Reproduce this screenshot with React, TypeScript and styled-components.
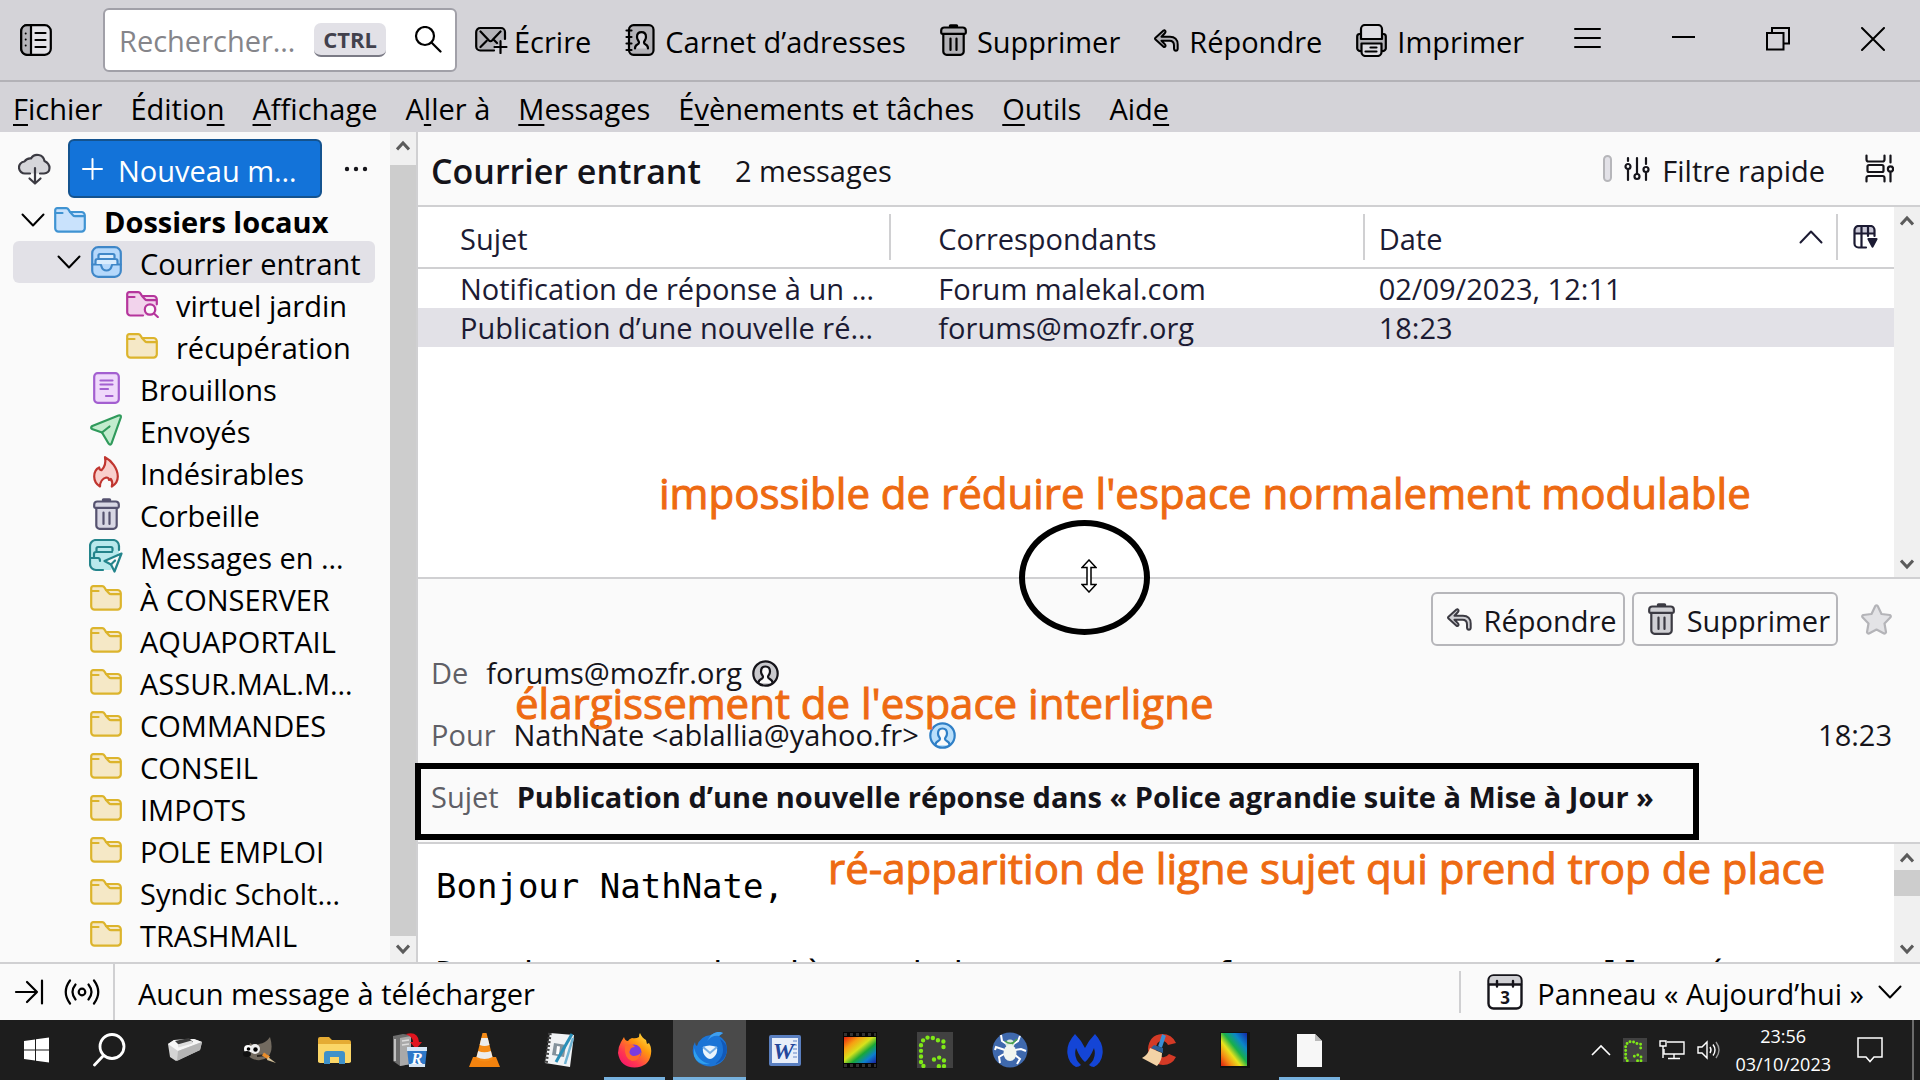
import React from "react";
import styled, { createGlobalStyle, css } from "styled-components";

const Global = createGlobalStyle`
  *, *::before, *::after { box-sizing: border-box; }
  html, body { margin: 0; height: 100%; }
  body {
    font-family: "Open Sans", "Noto Sans", sans-serif;
    font-size: 29px;
    line-height: 38px;
    color: #000;
    background: #fafafa;
    overflow: hidden;
  }
  button, input { font: inherit; color: inherit; margin: 0; }
  button { border: 0; background: none; padding: 0; cursor: default; }
  a { color: inherit; text-decoration: none; }
  svg { display: block; flex: none; }
`;

/* ---------- shared ---------- */

const ink = "#15141a";
const line = "#d0d0d2";

const Window = styled.div`
  display: flex;
  flex-direction: column;
  height: 100vh;
  min-height: 900px;
`;

const Label = styled.span`
  padding-top: 4px;
  white-space: nowrap;
`;

/* ---------- top toolbar ---------- */

const Toolbar = styled.header`
  display: flex;
  align-items: center;
  height: 82px;
  padding: 0 20px;
  background: #d4d3d8;
  border-bottom: 2px solid #b3b2b7;
`;

const SearchBox = styled.label`
  display: flex;
  align-items: center;
  width: 354px;
  height: 64px;
  margin: 0 18px 0 51px;
  padding: 0 13px 0 14px;
  background: #fff;
  border: 2px solid #a1a0a8;
  border-radius: 6px;
`;

const SearchInput = styled.input`
  flex: 1;
  min-width: 0;
  padding: 2px 0 0;
  border: 0;
  outline: 0;
  background: none;
  &::placeholder { color: #85858a; opacity: 1; }
`;

const Key = styled.kbd`
  margin-right: 28px;
  padding: 0 9px;
  border-radius: 7px;
  border-bottom: 2px solid #7a7a85;
  background: #e2e1e7;
  color: #42414d;
  font: 700 22px/32px "Open Sans", "Noto Sans", sans-serif;
`;

const Tools = styled.nav`
  display: flex;
  gap: 34px;
`;

const ToolButton = styled.button<{ $gap?: number }>`
  display: flex;
  align-items: center;
  gap: ${(p) => p.$gap ?? 10}px;
`;

const WindowControls = styled.div`
  display: flex;
  align-items: center;
  gap: 71px;
  margin-left: auto;
  padding-right: 15px;
`;

/* ---------- menu bar ---------- */

const MenuBar = styled.nav`
  display: flex;
  gap: 28px;
  height: 50px;
  padding: 8px 13px 0;
  background: #d4d3d8;
  u {
    text-decoration-thickness: 2px;
    text-underline-offset: 4px;
    text-decoration-skip-ink: none;
  }
`;

/* ---------- main split ---------- */

const Main = styled.main`
  display: flex;
  flex: 1;
  min-height: 0;
`;

const FolderPane = styled.aside`
  display: flex;
  flex: none;
  width: 418px;
  border-right: 2px solid ${line};
`;

const FolderColumn = styled.div`
  flex: 1;
  min-width: 0;
  padding: 7px 13px 0;
`;

const FolderHeader = styled.div`
  display: flex;
  align-items: center;
  padding: 0 8px 1px 5px;
`;

const NewMessage = styled.button`
  display: flex;
  align-items: center;
  gap: 15px;
  width: 254px;
  height: 59px;
  margin: 0 22px 0 17px;
  padding-left: 12px;
  border: 2px solid #14538f;
  border-radius: 6px;
  background: #1373d9;
  color: #fff;
`;

const Tree = styled.ul`
  list-style: none;
  margin: 0;
  padding: 0;
`;

const TreeRow = styled.li<{ $level: number; $selected?: boolean; $bold?: boolean }>`
  display: flex;
  align-items: center;
  height: 42px;
  margin-right: 2px;
  padding-left: ${(p) => 8 + p.$level * 36}px;
  border-radius: 6px;
  ${(p) => p.$selected && css`background: #e2e1e7;`}
  ${(p) => p.$bold && css`font-weight: 700;`}
`;

const Twisty = styled.button`
  width: 26px;
  margin-right: 6px;
`;

const FolderIcon = styled.span`
  display: flex;
  justify-content: center;
  width: 34px;
  margin-right: 17px;
`;

/* ---------- scrollbar ---------- */

const Bar = styled.div`
  display: flex;
  flex-direction: column;
  flex: none;
  width: 26px;
  background: #f0f0f0;
`;

const BarButton = styled.button`
  display: flex;
  align-items: center;
  justify-content: center;
  flex: none;
  height: 26px;
`;

const BarTrack = styled.div<{ $top: number }>`
  display: flex;
  flex: 1;
  padding-top: ${(p) => p.$top}px;
`;

const Thumb = styled.div<{ $size: string }>`
  width: 100%;
  height: ${(p) => p.$size};
  background: #cdcdcd;
`;

function Scrollbar({ size, top = 0 }: { size?: string; top?: number }) {
  return (
    <Bar>
      <BarButton aria-label="Défiler vers le haut">
        <svg width="14" height="11" viewBox="0 0 14 11" fill="none" stroke="#5b5b5b" strokeWidth="3"><path d="M1 9.5 7 3l6 6.5" /></svg>
      </BarButton>
      <BarTrack $top={top}>{size && <Thumb $size={size} />}</BarTrack>
      <BarButton aria-label="Défiler vers le bas">
        <svg width="14" height="11" viewBox="0 0 14 11" fill="none" stroke="#5b5b5b" strokeWidth="3"><path d="M1 1.5 7 8l6-6.5" /></svg>
      </BarButton>
    </Bar>
  );
}

/* ---------- message list ---------- */

const MailPane = styled.section`
  position: relative;
  display: flex;
  flex: 1;
  flex-direction: column;
  min-width: 0;
`;

const ListHeader = styled.div`
  display: flex;
  align-items: center;
  height: 75px;
  padding: 0 26px 0 13px;
  color: ${ink};
  border-bottom: 2px solid ${line};
`;

const Title = styled.h1`
  margin: 0 34px 0 0;
  padding-top: 4px;
  font-size: 34px;
  font-weight: 600;
`;

const FilterButton = styled.button`
  display: flex;
  align-items: center;
  gap: 12px;
  margin: 0 40px 0 auto;
`;

const Pill = styled.span`
  width: 9px;
  height: 27px;
  border: 2px solid #b6b6ba;
  border-radius: 5px;
  background: #e2e1e7;
`;

const ListArea = styled.div`
  display: flex;
  flex: none;
  height: 372px;
  background: #fff;
  border-bottom: 2px solid ${line};
`;

const ListBody = styled.div`
  flex: 1;
  min-width: 0;
`;

const Table = styled.table`
  width: 100%;
  table-layout: fixed;
  border-spacing: 0;
  color: #1c1b33;
  th, td { padding: 0; text-align: left; font-weight: 400; }
  th { height: 62px; border-bottom: 2px solid ${line}; }
`;

const PickerCol = styled.col`
  width: 56px;
`;

const HeadCell = styled.div<{ $indent: number; $last?: boolean }>`
  display: flex;
  align-items: center;
  justify-content: space-between;
  height: 46px;
  padding: 0 13px 0 ${(p) => p.$indent}px;
  border-right: ${(p) => (p.$last ? 0 : 2)}px solid ${line};
`;

const Row = styled.tr<{ $selected?: boolean }>`
  height: 39px;
  background: ${(p) => (p.$selected ? "#e2e1e7" : "transparent")};
`;

const Cell = styled.div<{ $indent: number }>`
  height: 39px;
  padding: 1px 0 0 ${(p) => p.$indent}px;
  white-space: nowrap;
`;

/* ---------- message view ---------- */

const MessageHead = styled.div`
  display: flex;
  flex: none;
  flex-direction: column;
  gap: 18px;
  padding: 13px 28px 24px 13px;
  color: ${ink};
  border-bottom: 2px solid ${line};
`;

const Actions = styled.div`
  display: flex;
  align-items: center;
  justify-content: flex-end;
  gap: 7px;
  margin-bottom: -14px;
`;

const ActionButton = styled.button`
  display: flex;
  align-items: center;
  gap: 12px;
  height: 54px;
  padding: 0 6px 0 14px;
  border: 2px solid #b6b6ba;
  border-radius: 6px;
`;

const StarButton = styled.button`
  margin-left: 16px;
`;

const Field = styled.div`
  display: flex;
  align-items: center;
  height: 44px;
  padding-top: 2px;
  svg { margin-left: 10px; }
`;

const FieldName = styled.span`
  margin-right: 18px;
  color: #5f5f66;
`;

const Subject = styled.strong`
  font-weight: 700;
`;

const Time = styled.time`
  margin-left: auto;
`;

const BodyArea = styled.div`
  display: flex;
  flex: 1;
  min-height: 0;
  background: #fff;
`;

const BodyText = styled.pre`
  flex: 1;
  min-width: 0;
  margin: 0;
  padding: 20px 0 0 18px;
  overflow: hidden;
  font: 34px/44px "DejaVu Sans Mono", monospace;
`;

/* ---------- annotations drawn over the mail pane ---------- */

const Note = styled.p<{ $x: number; $y: number }>`
  position: absolute;
  left: ${(p) => p.$x}px;
  top: ${(p) => p.$y}px;
  margin: 0;
  font: 500 42px/50px "Open Sans", "Noto Sans", sans-serif;
  color: #ee6a12;
  -webkit-text-stroke: 1px #ee6a12;
  white-space: nowrap;
`;

const Ring = styled.div`
  position: absolute;
  left: 601px;
  top: 388px;
  display: flex;
  align-items: center;
  justify-content: center;
  width: 131px;
  height: 115px;
  padding: 0 0 4px 8px;
  border: 6px solid #000;
  border-radius: 50%;
`;

const Frame = styled.div`
  position: absolute;
  left: -3px;
  top: 631px;
  width: 1284px;
  height: 77px;
  border: 6px solid #000;
`;

/* ---------- status bar ---------- */

const StatusBar = styled.footer`
  display: flex;
  align-items: center;
  flex: none;
  height: 58px;
  padding: 0 18px 0 14px;
  border-top: 2px solid ${line};
`;

const StatusIcons = styled.div`
  display: flex;
  align-items: center;
  gap: 20px;
  height: 100%;
  margin-right: 23px;
  padding-right: 13px;
  border-right: 2px solid ${line};
`;

const TodayButton = styled.button`
  display: flex;
  align-items: center;
  gap: 14px;
  height: 42px;
  margin-left: auto;
  padding-left: 26px;
  border-left: 2px solid ${line};
`;

/* ---------- taskbar ---------- */

const Taskbar = styled.nav`
  display: flex;
  flex: none;
  height: 60px;
  padding-right: 6px;
  background: #1d1d1d;
  color: #fff;
`;

const Task = styled.button<{ $open?: boolean; $active?: boolean }>`
  display: flex;
  align-items: center;
  justify-content: center;
  width: 75px;
  &:first-child { width: 72px; }
  ${(p) => p.$open && css`
    border: solid transparent;
    border-width: 0 7px;
    box-shadow: inset 0 -3px #76b1de;
    background-clip: padding-box;
  `}
  ${(p) => p.$active && css`
    border-width: 0 1px;
    background-color: #4a4a4a;
  `}
`;

const Tray = styled.div`
  display: flex;
  align-items: center;
  gap: 12px;
  margin-left: auto;
  padding-right: 29px;
  border-right: 2px solid #6b6b6b;
`;

const Clock = styled.time`
  margin: 0 14px 0 2px;
  font: 18px/28px "Open Sans", "Noto Sans", sans-serif;
  text-align: center;
`;

/* ---------- icons ---------- */

type IconProps = { c?: string; f?: string };

const Chevron = ({ up }: { up?: boolean }) => (
  <svg width="24" height="14" viewBox="0 0 24 14" fill="none" stroke="currentColor" strokeWidth="2" strokeLinecap="round" strokeLinejoin="round">
    <path d={up ? "M1.5 12.5 12 1.5l10.5 11" : "M1.5 1.5 12 12.5 22.5 1.5"} />
  </svg>
);

const SpacesIcon = () => (
  <svg width="32" height="32" viewBox="0 0 32 32" fill="none" stroke="#000" strokeWidth="2.2" strokeLinecap="round">
    <rect x="1.2" y="1.2" width="29.6" height="29.6" rx="6" fill="#e4e3e8" />
    <path d="M7 1.2h4v29.6H7a6 6 0 0 1-5.8-6V7A6 6 0 0 1 7 1.2z" fill="#b5b4b9" />
    <path d="M15.5 9h10M15.5 16h10M15.5 23h10" />
    <path d="M5.7 9.5v.1M5.7 15.5v.1M5.7 21.5v.1" strokeWidth="2" />
  </svg>
);

const SearchIcon = () => (
  <svg width="28" height="28" viewBox="0 0 28 28" fill="none" stroke="#000" strokeWidth="2.2" strokeLinecap="round">
    <circle cx="11" cy="10" r="9" /><path d="m17.500 16.500 9 9" />
  </svg>
);

const WriteIcon = () => (
  <svg width="33" height="28" viewBox="0 0 33 28" fill="none" stroke="#000" strokeWidth="2.2" strokeLinecap="round" strokeLinejoin="round">
    <path d="M5 2h21a4 4 0 0 1 4 4v8h-6v5h-4v5.500H5a4 4 0 0 1-4-4V6a4 4 0 0 1 4-4z" fill="#b3b2b7" stroke="none" />
    <path d="M19 24.500H5.200a4 4 0 0 1-4-4V6a4 4 0 0 1 4-4H26a4 4 0 0 1 4 4v7M5.500 5.500l8.500 9q1.500 1.500 3 0l8.500-9M5.500 21l6-6M19.500 14.500l2.500 2.500M25.500 15v12M19.500 21h12" />
  </svg>
);

const BookIcon = () => (
  <svg width="30" height="32" viewBox="0 0 30 32" fill="none" stroke="#000" strokeWidth="2.2" strokeLinecap="round">
    <rect x="4" y="1.200" width="24.500" height="29.600" rx="4.500" fill="#b3b2b7" />
    <path d="M1.500 6.500h5M1.500 13h5M1.500 19.500h5M1.500 26h5" />
    <path d="M10 24.500c0-5 4-3 4-6 0-1.500-2-2.500-2-5.500 0-3 1.800-4.800 4.500-4.800s4.500 1.800 4.500 4.800c0 3-2 4-2 5.500 0 3 4 1 4 6" fill="#d4d3d8" />
  </svg>
);

const TrashIcon = ({ c = "#000", f = "#b3b2b7" }: IconProps) => (
  <svg width="27" height="32" viewBox="0 0 27 32" fill="none" stroke={c} strokeWidth="2.200" strokeLinecap="round" strokeLinejoin="round">
    <path d="M3.300 9v18.500a3.300 3.300 0 0 0 3.300 3.300h13.800a3.300 3.300 0 0 0 3.300-3.300V9z" fill={f} />
    <path d="M1.200 8.800V6.500a3 3 0 0 1 3-3h18.600a3 3 0 0 1 3 3v2.300q0 1-1 1H2.200q-1 0-1-1z" fill={f} />
    <path d="M10.500 2h6" strokeWidth="3.500" /><path d="M10.500 14.500v11.500M16.500 14.500v11.500" />
  </svg>
);

const ReplyIcon = ({ c = "#000", f = "#b3b2b7" }: IconProps) => (
  <svg width="25" height="23" viewBox="0 0 25 23" fill={f} stroke={c} strokeWidth="2" strokeLinejoin="round" strokeLinecap="round">
    <path d="M9.500 1.500 1.500 8.700q-.9.900 0 1.800L9.500 17.800q1.300.6 1.900-.5.400-1-.4-1.900L7.500 11.800h8c3 0 4.500 1.800 4.500 4.700v3.200q.2 2 1.900 2t1.800-2v-4.200c0-4.800-3-7.800-7.700-7.800H7.500L11 4q.8-1 .3-2-.7-1.200-1.800-.5z" />
  </svg>
);

const PrintIcon = () => (
  <svg width="31" height="33" viewBox="0 0 31 33" fill="none" stroke="#000" strokeWidth="2.200" strokeLinecap="round" strokeLinejoin="round">
    <path d="M4.500 10h-1A2.500 2.500 0 0 0 1.200 12.500v11A3 3 0 0 0 4.500 27H26.500a3 3 0 0 0 3.300-3.500v-11A2.500 2.500 0 0 0 27.500 10" fill="#b3b2b7" />
    <path d="M5 15V5a4 4 0 0 1 4-4h13a4 4 0 0 1 4 4v10z" fill="#dddce1" />
    <path d="M5.500 19.500h20V28a4 4 0 0 1-4 4h-12a4 4 0 0 1-4-4z" fill="#dddce1" />
    <path d="M14.500 23.500h6M9.500 27.500h11" />
  </svg>
);

const MenuIcon = () => (
  <svg width="27" height="24" viewBox="0 0 27 24" stroke="#000" strokeWidth="2" strokeLinecap="round"><path d="M1 1h25M1 10h25M1 19h25" /></svg>
);
const MinimizeIcon = () => (
  <svg width="23" height="24" viewBox="0 0 23 24" stroke="#000" strokeWidth="2"><path d="M0 9h23" /></svg>
);
const RestoreIcon = () => (
  <svg width="24" height="26" viewBox="0 0 24 26" fill="none" stroke="#000" strokeWidth="2"><path d="M1 6h16.500v16.500H1zM6 6V1h17v15.500h-5" /></svg>
);
const CloseIcon = () => (
  <svg width="24" height="26" viewBox="0 0 24 26" stroke="#000" strokeWidth="2" strokeLinecap="round"><path d="m1 1 22 22M23 1 1 23" /></svg>
);

const CloudIcon = () => (
  <svg width="33" height="32" viewBox="0 0 33 32" fill="none" stroke="#3b3a42" strokeWidth="2.200" strokeLinecap="round" strokeLinejoin="round">
    <path d="M12 20.500H7.500a6 6 0 0 1-1-12A7 7 0 0 1 13 5.500 7.300 7.300 0 0 1 26.500 8c3 1.500 5 3.500 5 7 0 3.500-2.500 5.500-5.500 5.500h-4" fill="#d6d6da" />
    <path d="M17 15v15M11.500 25.500l5.500 5 5.500-5" />
  </svg>
);

const PlusIcon = () => (
  <svg width="21" height="22" viewBox="0 0 21 22" stroke="#fff" strokeWidth="2" strokeLinecap="round"><path d="M10.500 1v20M1 11h19" /></svg>
);
const DotsIcon = () => (
  <svg width="24" height="6" viewBox="0 0 24 6" fill={ink}><circle cx="3" cy="3" r="2.200" /><circle cx="12" cy="3" r="2.200" /><circle cx="21" cy="3" r="2.200" /></svg>
);

const Folder = ({ c = "#dcb42c", f = "#f5e8c6" }: IconProps) => (
  <svg width="32" height="26" viewBox="0 0 32 26" fill={f} stroke={c} strokeWidth="2.200" strokeLinecap="round" strokeLinejoin="round">
    <path d="M1.200 3.200a2 2 0 0 1 2-2h9q1.500 0 2.200 1.200L16 5h11.500a3.300 3.300 0 0 1 3.300 3.300v13a3.300 3.300 0 0 1-3.300 3.300h-23a3.300 3.300 0 0 1-3.300-3.300z" />
    <path d="M1.500 6h7M16 5l3 3.200q.8 1 2 1h9" fill="none" />
  </svg>
);

const SearchFolder = () => (
  <svg width="33" height="27" viewBox="0 0 33 27" fill="none" stroke="#b5359c" strokeWidth="2.200" strokeLinecap="round" strokeLinejoin="round">
    <path d="M1.200 3.200a2 2 0 0 1 2-2h9q1.500 0 2.200 1.200L16 5h11.500a3.300 3.300 0 0 1 3.300 3.300V20l-6 4.600H4.500a3.300 3.300 0 0 1-3.300-3.300z" fill="#f2d3ec" stroke="none" />
    <path d="M17 24.500H4.500a3.300 3.300 0 0 1-3.300-3.300v-18a2 2 0 0 1 2-2h9q1.500 0 2.200 1.200L16 5h11.500a3.300 3.300 0 0 1 3.300 3.300v5M1.500 6h7M16 5l3 3.200q.8 1 2 1h9" />
    <circle cx="24" cy="18.500" r="5.200" fill="#fafafa" /><path d="m28 22.500 3.800 3.500" />
  </svg>
);

const InboxIcon = ({ c = "#3f87c8", f = "#b5d8fb" }: IconProps) => (
  <svg width="31" height="32" viewBox="0 0 31 32" fill="none" stroke={c} strokeWidth="2.200" strokeLinejoin="round" strokeLinecap="round">
    <rect x="1.200" y="1.200" width="28.600" height="29.600" rx="6" fill={f} />
    <path d="M1.200 18.500h8c1 0 1 1 1.300 2 .7 2.500 2.500 4 5 4s4.300-1.500 5-4c.3-1 .3-2 1.300-2h8" />
    <path d="M4.500 18v-3q0-2 2-2h18q2 0 2 2v3M7.500 12.500V9.500q0-1.500 1.500-1.500h13q1.500 0 1.500 1.500v3" fill="#d9ecfd" />
  </svg>
);

const DraftIcon = () => (
  <svg width="27" height="32" viewBox="0 0 27 32" stroke="#a35fd0" strokeWidth="2.200" strokeLinecap="round">
    <rect x="1.200" y="1.200" width="24.600" height="29.600" rx="3.500" fill="#efd9fb" />
    <path d="M7.500 8.500h12M7.500 12.500h12M7.500 17h7.500M13 24h6.500" />
  </svg>
);

const SentIcon = () => (
  <svg width="32" height="32" viewBox="0 0 32 32" stroke="#2f9a5b" strokeWidth="2.200" strokeLinecap="round" strokeLinejoin="round">
    <path d="M28.500 1.500Q31.300.8 30.800 3.500L21.500 29.500q-1.300 2.200-2.800.2L12 18.500 2 15q-1.800-1.500.3-3z" fill="#c2ecce" />
    <path d="m12 18.500 7.500-6" />
  </svg>
);

const JunkIcon = () => (
  <svg width="26" height="33" viewBox="0 0 26 33" fill="#f9d0cd" stroke="#c0352f" strokeWidth="2.200" strokeLinejoin="round" strokeLinecap="round">
    <path d="M7 30.500C3 28 1.200 24.500 1.200 20.500c0-4 1.800-7.500 5-9 .2 1.800 1 2.700 2.300 2.700 3.500-3.500 4.500-8 3.500-13 6 3 12.800 11 12.800 19.300 0 4-2 7.700-6 10 1-3.500.5-5.500-1-7.500-.8.800-1 1-1.800 1 0-1.500-.8-2.500-2.800-2.500-3.500 1-6.200 4.500-6.200 9z" />
  </svg>
);

const OutboxIcon = () => (
  <svg width="34" height="34" viewBox="0 0 34 34" fill="none" stroke="#23848b" strokeWidth="2.200" strokeLinejoin="round" strokeLinecap="round">
    <path d="M22 31H7a6 6 0 0 1-6-6V7a6 6 0 0 1 6-6h17a6 6 0 0 1 6 6v6z" fill="#b8e9ec" stroke="none" />
    <path d="M14 31H7a6 6 0 0 1-6-6V7a6 6 0 0 1 6-6h17a6 6 0 0 1 6 6v4" />
    <path d="M1 19h8q2 0 2 3M5 18v-3q0-2 2-2h16M7.500 12.500V9.500q0-1.500 1.500-1.500h13q1.500 0 1.500 1.500v2" />
    <path d="M32.500 14.500 15.500 22l6.500 3.500 3.500 7z" fill="#fafafa" /><path d="m22 25.500 4-4" />
  </svg>
);

const FilterIcon = () => (
  <svg width="26" height="26" viewBox="0 0 26 26" fill="none" stroke={ink} strokeWidth="2.200" strokeLinecap="round">
    <path d="M4 2v3M4 13.500V24M13 2v15.500M22 2v6M22 17v7" /><circle cx="4" cy="10.500" r="2.500" /><circle cx="13" cy="20.500" r="2.500" /><circle cx="22" cy="13.500" r="2.500" />
  </svg>
);

const DisplayIcon = () => (
  <svg width="29" height="29" viewBox="0 0 29 29" fill="none" stroke={ink} strokeWidth="2.200" strokeLinecap="round">
    <path d="M1.500 1.500v4q0 2 2 2h14q2 0 2-2v-4M1.500 27.500V24q0-2 2-2h14q2 0 2 2v3.500" /><rect x="2.500" y="11" width="16" height="7" rx="1.500" />
    <path d="M25.500 1.500v7M25.500 18.500v9" /><circle cx="25.500" cy="15" r="2.600" />
  </svg>
);

const PickerIcon = () => (
  <svg width="25" height="24" viewBox="0 0 25 24" fill="none" stroke="#1c1b33" strokeWidth="2.200" strokeLinecap="round" strokeLinejoin="round">
    <path d="M1.500 8V5a4 4 0 0 1 4-4h12a4 4 0 0 1 4 4v3z" fill="#c9c8d6" stroke="none" />
    <path d="M13 22.500H5.500a4 4 0 0 1-4-4V5a4 4 0 0 1 4-4h12a4 4 0 0 1 4 4v6M1.500 8.500h20M8.500 1v21.500M15 1v10" />
    <path d="M15.500 14h8l-4 7.500z" fill="#1c1b33" />
  </svg>
);

const StarIcon = () => (
  <svg width="31" height="31" viewBox="0 0 31 31" fill="#e3e3e6" stroke="#b4b4b8" strokeWidth="2.200" strokeLinejoin="round">
    <path d="M14.300 2q1.200-1.200 2.400 0l3.800 8 8.300 1q1.500.8.700 2.300l-6 6.200 1.500 8.800q-.4 1.500-2 1.200L15.500 25.500 8 29.500q-1.600.3-2-1.200l1.500-8.800-6-6.200q-.8-1.500.7-2.300l8.300-1z" />
  </svg>
);

const PersonIcon = ({ c = ink, f = "#c9c9cd" }: IconProps) => (
  <svg width="27" height="27" viewBox="0 0 27 27" fill={f} stroke={c} strokeWidth="2.200" strokeLinecap="round">
    <circle cx="13.500" cy="13.500" r="12.200" />
    <path d="M6.500 23c0-4.500 4.500-3.500 4.500-6 0-1.500-2-2.500-2-5.500C9 8.500 10.800 6.500 13.500 6.500S18 8.500 18 11.500c0 3-2 4-2 5.500 0 2.500 4.500 1.500 4.500 6" fill="#fafafa" />
  </svg>
);

const ResizeCursor = () => (
  <svg width="16" height="34" viewBox="0 0 16 34" fill="#fff" stroke="#000" strokeWidth="1.500">
    <path d="M8 1 15 8.500H10V25.500h5L8 33 1 25.500H6V8.500H1z" />
  </svg>
);

const CollapseIcon = () => (
  <svg width="30" height="26" viewBox="0 0 30 26" fill="none" stroke="#000" strokeWidth="2.200" strokeLinecap="round" strokeLinejoin="round"><path d="M2 13h21M13 3l10 10-10 10M28 1.500v23" /></svg>
);

const OnlineIcon = () => (
  <svg width="36" height="26" viewBox="0 0 36 26" fill="none" stroke="#000" strokeWidth="2.200" strokeLinecap="round">
    <circle cx="18" cy="13" r="3.300" /><path d="M6 1.500Q-2.500 13 6 24.500M30 1.500q8.500 11.500 0 23M11.500 5.500q-6 7.500 0 15M24.500 5.500q6 7.500 0 15" />
  </svg>
);

const CalendarIcon = () => (
  <svg width="36" height="36" viewBox="0 0 36 36" fill="none" stroke={ink} strokeWidth="2.400" strokeLinecap="round">
    <rect x="1.500" y="1.500" width="33" height="33" rx="5" fill="#fff" />
    <path d="M2.500 10V6q0-4 4-4h23q4 0 4 4v4z" fill="#d0d0d4" stroke="none" />
    <path d="M2 10.500h32M10 7v5.500M26 7v5.500" />
    <text x="18" y="29.500" textAnchor="middle" fontFamily="Open Sans" fontWeight="700" fontSize="17" fill={ink} stroke="none">3</text>
  </svg>
);

/* taskbar icons */

const WindowsIcon = () => (
  <svg width="25" height="26" viewBox="0 0 25 26" fill="#fff"><path d="M0 4 11 2.500v10H0zM12 2.300 25 .5v12H12zM0 13.500h11v10L0 22zM12 13.500h13v12l-13-1.800z" /></svg>
);
const FindIcon = () => (
  <svg width="34" height="34" viewBox="0 0 34 34" fill="none" stroke="#fff" strokeWidth="2.800" strokeLinecap="round"><circle cx="19" cy="13.500" r="12" /><path d="M10.500 22.500 1.500 32" /></svg>
);
const ScannerIcon = () => (
  <svg width="36" height="24" viewBox="0 0 36 24"><path d="M1 6 7 2l20-1 8 3-2 8-24 11-6-4z" fill="#d4d4d4" /><path d="m1 6 6-4 20-1 8 3-24 9z" fill="#f6f6f6" /><path d="m8 3 14-3 4 4-13 4z" fill="#3a3a3a" /><path d="m11 8 14-4" stroke="#ddd" strokeWidth="3" /><path d="m11 13 24-9-2 8L10 23z" fill="#b5b5b5" /></svg>
);
const GimpIcon = () => (
  <svg width="34" height="26" viewBox="0 0 34 26"><path d="M27 0q4 13-2 20-8 6-17 1Q3 18 7 6q5 4 9 1 7-1 11-7z" fill="#736b60" /><circle cx="5" cy="12" r="4" fill="#fff" /><circle cx="12" cy="12" r="5" fill="#eee" /><circle cx="5.500" cy="12" r="1.800" /><circle cx="12.500" cy="12.500" r="2.200" /><ellipse cx="4" cy="17" rx="4" ry="3" fill="#111" /><path d="m14 19 10-1" stroke="#2a2622" strokeWidth="2" /><path d="m20 17 6 4" stroke="#e98e2c" strokeWidth="3.500" /><path d="m25 20 8 6-9-3z" fill="#d5c29a" /></svg>
);
const ExplorerIcon = () => (
  <svg width="33" height="27" viewBox="0 0 33 27"><path d="M0 2q0-2 2-2h9l3 3h17q2 0 2 2v20H0z" fill="#e5ab33" /><path d="M0 7h33v17q0 2-2 2H2q-2 0-2-2z" fill="#fbd667" /><path d="M6 27V17q0-3 3-3h15q3 0 3 3v10h-6v-7h-9v7z" fill="#3f91c9" /></svg>
);
const RevoIcon = () => (
  <svg width="34" height="35" viewBox="0 0 34 35"><path d="M0 3 10 1l8 1v29l-11 2-7-5z" fill="#6d6d6d" /><path d="M7 5 18 3v28L7 33z" fill="#a9a9a9" /><path d="M2 6v22M9 8l7-1M9 12l7-1" stroke="#ddd" strokeWidth="1.500" /><path d="M13 1q12-3 13 8h3l-6 7-6-7h3q0-5-7-8z" fill="#e0141e" /><path d="M14 15h20l-2 19H16z" fill="#2e78c8" /><path d="M14 14h20v4H14zM16 31h16v3H16z" fill="#d6e6f5" /><text x="24" y="31" textAnchor="middle" fontFamily="Liberation Serif" fontWeight="700" fontStyle="italic" fontSize="17" fill="#fff">R</text></svg>
);
const VlcIcon = () => (
  <svg width="31" height="36" viewBox="0 0 31 36"><path d="M4 25h23l4 10H0z" fill="#f2820e" /><path d="M13.500 1h4L24 27q-8 5-17 0z" fill="#f58b16" /><path d="m12.300 6 6.500 0 1.700 7q-5 2-9.800 0zM9.200 19q6 2.500 12.700 0l1.600 6q-8 4-16 0z" fill="#ececec" /></svg>
);
const JournalIcon = () => (
  <svg width="32" height="36" viewBox="0 0 32 36"><path d="m6 1 24 2-4 32-25-4z" fill="#f1f3f5" /><path d="M6 1 2 31" stroke="#444" strokeWidth="3.500" strokeDasharray="2 2" /><path d="m10 11 12 2-2 12-12-2z" fill="#84929c" /><path d="m13 14 3 .5-1 8-3-.500z" fill="#fff" /><path d="M28 2 12 30" stroke="#2a8fb8" strokeWidth="3" /><path d="m29 6-8 26" stroke="#6fb3d3" strokeWidth="2.500" /></svg>
);
const FirefoxIcon = () => (
  <svg width="35" height="35" viewBox="0 0 35 35"><defs><linearGradient id="ff" x1="1" y1="0" x2=".2" y2="1"><stop offset="0" stopColor="#fff44f" /><stop offset=".4" stopColor="#ff980e" /><stop offset=".75" stopColor="#ff3750" /><stop offset="1" stopColor="#f5156c" /></linearGradient></defs><path d="M4 9 7 4q1 4 4 4 1-2 4-3 4 1 7-1 0-3 1-4 2 5 6 7l1 4 2-1q3 5 2 11Q32 34 17.500 34.500 3 34 1 20q0-6 3-11z" fill="url(#ff)" /><circle cx="17" cy="19" r="7.500" fill="#7a3be0" /><path d="M8 13q7-4 10 1-4 0-5 3-2 4 3 6 6 0 8-4-1 9-9 9-8-2-7-15z" fill="#ff6a2a" /></svg>
);
const ThunderbirdIcon = () => (
  <svg width="36" height="36" viewBox="0 0 36 36"><path d="M3 10q0 3 2 4Q8 4 19 3q7-5 12-2l-4 3q8 4 8 14-1 14-16 16.500Q4 34 1 21q-1-6 2-11z" fill="#1b74d6" /><path d="M19 3q7-5 12-2l-4 3q-7-1-12 5z" fill="#3f9fee" /><path d="M28 7q8 15-5 25 11-3 12-14 0-7-7-11z" fill="#1259b8" /><path d="M2 16q4 14 16 16Q6 34 2 24z" fill="#2fa0ee" /><path d="M11 15q6-3 14 0 1 6-3 10-4 4-8 0-4-4-3-10z" fill="#eaf4fd" /><path d="m11 15 7 6 7-6" fill="none" stroke="#75aee6" strokeWidth="2" /></svg>
);
const WordIcon = () => (
  <svg width="32" height="31" viewBox="0 0 32 31"><rect width="32" height="31" rx="2" fill="#5a7fc0" /><rect x="3" y="3" width="26" height="25" fill="#e8eef9" /><path d="M24 6h4M24 10h4M24 14h4M24 18h4M24 22h4" stroke="#8fa8d6" strokeWidth="1.500" /><text x="14.500" y="23.500" textAnchor="middle" fontFamily="Liberation Serif" fontWeight="700" fontStyle="italic" fontSize="24" fill="#24479b">W</text></svg>
);
const Spectrum = ({ id, film }: { id: string; film?: boolean }) => (
  <svg width={film ? 34 : 30} height="36" viewBox={film ? "0 0 34 36" : "1 0 30 36"}><defs><linearGradient id={id} x1={film ? "0" : "1"} y1="0" x2={film ? "1" : "0"} y2="1"><stop offset="0" stopColor={film ? "#e8200c" : "#1426a8"} /><stop offset=".25" stopColor={film ? "#f7a012" : "#0b87c8"} /><stop offset=".45" stopColor={film ? "#d7e21c" : "#18b04a"} /><stop offset=".62" stopColor={film ? "#19a838" : "#e8e31c"} /><stop offset=".8" stopColor={film ? "#0c7fd0" : "#f48a14"} /><stop offset="1" stopColor={film ? "#1c1f9c" : "#e01c10"} /></linearGradient></defs>
    <rect width="34" height="36" fill={film ? "#060606" : "#111"} />
    {film && <path d="M1 2.500h32M1 33.500h32" stroke="#333" strokeWidth="3" strokeDasharray="3 3" />}
    <rect x={film ? 1 : 2} y={film ? 5 : 1} width={film ? 32 : 26} height={film ? 26 : 33} fill={`url(#${id})`} /></svg>
);
const GreenshotIcon = ({ s }: { s: number }) => (
  <svg width={s} height={s} viewBox="0 0 36 36"><rect width="36" height="36" fill="#414141" /><path d="M26.500 15V9.500L20 8l-6-3-6 1-4 5v22l5 2M17 27.500l5-2 5 3v6l-7-.500" fill="none" stroke="#7fe817" strokeWidth="4.400" strokeLinecap="round" strokeDasharray="0 5.600" /></svg>
);
const SpiderIcon = () => (
  <svg width="36" height="36" viewBox="0 0 36 36"><circle cx="18" cy="18" r="17.500" fill="#3f69ad" /><g stroke="#fff" strokeWidth="2" fill="none"><path d="m16 13-6-4-1-6M20 13l6-4 2-5M13 18l-9-3-1 3M23 18l6-1 5 2M12 22l-5 3 1 6M23 23l5 4-3 5" /></g><circle cx="18" cy="12" r="4.500" fill="#dbe9dd" /><ellipse cx="18" cy="21" rx="6.500" ry="8" fill="#f0f5f0" /><path d="M13 9q6 5 11-1M20 12l5-5" stroke="#48a04f" strokeWidth="1.600" fill="none" /></svg>
);
const MalwareIcon = () => (
  <svg width="36" height="33" viewBox="0 0 36 33" fill="#1445d6"><path d="M8 0q6 6 10 14Q22 6 28 0q9 10 7.500 20-1 9-8.500 13-3 0-5-2 8-7 5-17-4 10-9 14-5-4-9-14-3 10 5 17-2 2-5 2-7.500-4-8.500-13Q-1 10 8 0z" /></svg>
);
const CcleanerIcon = () => (
  <svg width="37" height="36" viewBox="0 0 37 36"><path d="M35 11Q31 2 21 2 8 3 7 17q1 15 15 16 9 0 13-8l-7-3q-3 4-7 3-6-1-6-8 0-8 6-8 4 0 6 4z" fill="#d43a26" /><path d="m23 3-4 12" stroke="#3a8fd6" strokeWidth="4" /><path d="m13 13 9 3v5l-12-5z" fill="#2d5f96" /><path d="m9 16 12 5q0 8-5 13L1 26q6-3 8-10z" fill="#f3d3a6" /></svg>
);
const DocIcon = () => (
  <svg width="25" height="33" viewBox="0 0 25 33"><path d="M0 0h18l7 7v26H0z" fill="#f7f7f7" /><path d="M18 0v7h7z" fill="#b9b9b9" /></svg>
);
const MonitorIcon = () => (
  <svg width="26" height="20" viewBox="0 0 26 20" fill="none" stroke="#fff" strokeWidth="1.400"><path d="M8 2h17v12H5V9M9 18.500h12M15 14v4.500" /><path d="M1 1h6v5H1zM4 6v12" /></svg>
);
const SpeakerIcon = () => (
  <svg width="24" height="20" viewBox="0 0 24 20" fill="none" stroke="#fff" strokeWidth="1.400"><path d="M1 7h4l5-5v16l-5-5H1z" /><path d="M13 7q2 3 0 6M16 4.500q4 5.500 0 11" /><path d="M19 2q6 8 0 16" stroke="#999" /></svg>
);
const NoticeIcon = () => (
  <svg width="26" height="26" viewBox="0 0 26 26" fill="none" stroke="#fff" strokeWidth="1.500"><path d="M1 1h24v19h-8l-4 4.500L9 20H1z" /></svg>
);

/* ---------- data ---------- */

type FolderEntry = { name: string; level: number; icon: React.ReactNode; open?: boolean; selected?: boolean; bold?: boolean };

const folders: FolderEntry[] = [
  { name: "Dossiers locaux", level: 0, icon: <Folder c="#3f93d2" f="#c9e2fc" />, open: true, bold: true },
  { name: "Courrier entrant", level: 1, icon: <InboxIcon />, open: true, selected: true },
  { name: "virtuel jardin", level: 2, icon: <SearchFolder /> },
  { name: "récupération", level: 2, icon: <Folder /> },
  { name: "Brouillons", level: 1, icon: <DraftIcon /> },
  { name: "Envoyés", level: 1, icon: <SentIcon /> },
  { name: "Indésirables", level: 1, icon: <JunkIcon /> },
  { name: "Corbeille", level: 1, icon: <TrashIcon c="#55526f" f="#d8d7e4" /> },
  { name: "Messages en …", level: 1, icon: <OutboxIcon /> },
  ...["À CONSERVER", "AQUAPORTAIL", "ASSUR.MAL.M…", "COMMANDES", "CONSEIL", "IMPOTS", "POLE EMPLOI", "Syndic Scholt…", "TRASHMAIL"].map((name) => ({
    name,
    level: 1,
    icon: <Folder />,
  })),
];

const menus: [string, string, string][] = [
  ["", "F", "ichier"],
  ["Éditio", "n", ""],
  ["", "A", "ffichage"],
  ["A", "l", "ler à"],
  ["", "M", "essages"],
  ["É", "v", "ènements et tâches"],
  ["", "O", "utils"],
  ["Aid", "e", ""],
];

const messages = [
  { subject: "Notification de réponse à un …", from: "Forum malekal.com", date: "02/09/2023, 12:11" },
  { subject: "Publication d’une nouvelle ré…", from: "forums@mozfr.org", date: "18:23", selected: true },
];

const tasks: { name: string; icon: React.ReactNode; open?: boolean; active?: boolean }[] = [
  { name: "Démarrer", icon: <WindowsIcon /> },
  { name: "Rechercher", icon: <FindIcon /> },
  { name: "Scanner", icon: <ScannerIcon /> },
  { name: "GIMP", icon: <GimpIcon /> },
  { name: "Explorateur", icon: <ExplorerIcon /> },
  { name: "Revo", icon: <RevoIcon /> },
  { name: "VLC", icon: <VlcIcon /> },
  { name: "Journal", icon: <JournalIcon /> },
  { name: "Firefox", icon: <FirefoxIcon />, open: true },
  { name: "Thunderbird", icon: <ThunderbirdIcon />, open: true, active: true },
  { name: "Word", icon: <WordIcon /> },
  { name: "Film", icon: <Spectrum id="film" film /> },
  { name: "Greenshot", icon: <GreenshotIcon s={36} /> },
  { name: "Anti-rootkit", icon: <SpiderIcon /> },
  { name: "Malwarebytes", icon: <MalwareIcon /> },
  { name: "CCleaner", icon: <CcleanerIcon /> },
  { name: "Couleurs", icon: <Spectrum id="rainbow" /> },
  { name: "Document", icon: <DocIcon />, open: true },
];

/* ---------- page ---------- */

export default function App() {
  return (
    <Window>
      <Global />
      <Toolbar>
        <ToolButton aria-label="Espaces"><SpacesIcon /></ToolButton>
        <SearchBox>
          <SearchInput placeholder="Rechercher…" aria-label="Rechercher" />
          <Key>CTRL</Key>
          <SearchIcon />
        </SearchBox>
        <Tools>
          <ToolButton $gap={6}><WriteIcon /><Label>Écrire</Label></ToolButton>
          <ToolButton><BookIcon /><Label>Carnet d’adresses</Label></ToolButton>
          <ToolButton><TrashIcon /><Label>Supprimer</Label></ToolButton>
          <ToolButton><ReplyIcon /><Label>Répondre</Label></ToolButton>
          <ToolButton><PrintIcon /><Label>Imprimer</Label></ToolButton>
        </Tools>
        <WindowControls>
          <ToolButton aria-label="Menu"><MenuIcon /></ToolButton>
          <ToolButton aria-label="Réduire"><MinimizeIcon /></ToolButton>
          <ToolButton aria-label="Restaurer"><RestoreIcon /></ToolButton>
          <ToolButton aria-label="Fermer"><CloseIcon /></ToolButton>
        </WindowControls>
      </Toolbar>

      <MenuBar>
        {menus.map(([before, key, after]) => (
          <a href="#menu" key={before + key + after}>{before}<u>{key}</u>{after}</a>
        ))}
      </MenuBar>

      <Main>
        <FolderPane>
          <FolderColumn>
            <FolderHeader>
              <button aria-label="Relever"><CloudIcon /></button>
              <NewMessage><PlusIcon /><Label>Nouveau m…</Label></NewMessage>
              <button aria-label="Options"><DotsIcon /></button>
            </FolderHeader>
            <Tree>
              {folders.map((f) => (
                <TreeRow key={f.name} $level={f.level} $selected={f.selected} $bold={f.bold}>
                  <Twisty as={f.open ? "button" : "span"} aria-label={f.open ? "Replier" : undefined}>{f.open && <Chevron />}</Twisty>
                  <FolderIcon>{f.icon}</FolderIcon>
                  <Label>{f.name}</Label>
                </TreeRow>
              ))}
            </Tree>
          </FolderColumn>
          <Scrollbar size="100%" top={7} />
        </FolderPane>

        <MailPane>
          <ListHeader>
            <Title>Courrier entrant</Title>
            <Label>2 messages</Label>
            <FilterButton><Pill /><FilterIcon /><Label>Filtre rapide</Label></FilterButton>
            <button aria-label="Affichage"><DisplayIcon /></button>
          </ListHeader>

          <ListArea>
            <ListBody>
              <Table>
                <colgroup><col /><col /><col /><PickerCol /></colgroup>
                <thead>
                  <tr>
                    <th><HeadCell $indent={42}><Label>Sujet</Label></HeadCell></th>
                    <th><HeadCell $indent={47}><Label>Correspondants</Label></HeadCell></th>
                    <th><HeadCell $indent={14}><Label>Date</Label><Chevron up /></HeadCell></th>
                    <th><HeadCell as="button" aria-label="Colonnes" $indent={15} $last><PickerIcon /></HeadCell></th>
                  </tr>
                </thead>
                <tbody>
                  {messages.map((m) => (
                    <Row key={m.subject} $selected={m.selected}>
                      <td><Cell $indent={42}>{m.subject}</Cell></td>
                      <td><Cell $indent={47}>{m.from}</Cell></td>
                      <td><Cell $indent={14}>{m.date}</Cell></td>
                      <td />
                    </Row>
                  ))}
                </tbody>
              </Table>
            </ListBody>
            <Scrollbar />
          </ListArea>

          <MessageHead>
            <Actions>
              <ActionButton><ReplyIcon c="#3b3a42" f="#d0d0d4" /><Label>Répondre</Label></ActionButton>
              <ActionButton><TrashIcon c="#3b3a42" f="#d0d0d4" /><Label>Supprimer</Label></ActionButton>
              <StarButton aria-label="Suivre"><StarIcon /></StarButton>
            </Actions>
            <Field><FieldName>De</FieldName>forums@mozfr.org<PersonIcon /></Field>
            <Field><FieldName>Pour</FieldName>NathNate &lt;ablallia@yahoo.fr&gt;<PersonIcon c="#2f7fc6" f="#b9dffb" /><Time>18:23</Time></Field>
            <Field><FieldName>Sujet</FieldName><Subject>Publication d’une nouvelle réponse dans « Police agrandie suite à Mise à Jour »</Subject></Field>
          </MessageHead>

          <BodyArea>
            <BodyText>{"Bonjour NathNate,\n\nDepuis votre dernière visite sur « mozfr.org », une nouvelle réponse"}</BodyText>
            <Scrollbar size="26px" />
          </BodyArea>

          <Note $x={241} $y={336}>impossible de réduire l'espace normalement modulable</Note>
          <Note $x={97} $y={546}>élargissement de l'espace interligne</Note>
          <Note $x={410} $y={711}>ré-apparition de ligne sujet qui prend trop de place</Note>
          <Ring><ResizeCursor /></Ring>
          <Frame />
        </MailPane>
      </Main>

      <StatusBar>
        <StatusIcons>
          <button aria-label="Replier le volet"><CollapseIcon /></button>
          <button aria-label="En ligne"><OnlineIcon /></button>
        </StatusIcons>
        <Label>Aucun message à télécharger</Label>
        <TodayButton><CalendarIcon /><Label>Panneau « Aujourd’hui »</Label><Chevron /></TodayButton>
      </StatusBar>

      <Taskbar>
        {tasks.map((t) => (
          <Task key={t.name} aria-label={t.name} $open={t.open} $active={t.active}>{t.icon}</Task>
        ))}
        <Tray>
          <svg width="20" height="12" viewBox="0 0 20 12" fill="none" stroke="#fff" strokeWidth="1.600"><path d="m1 11 9-9 9 9" /></svg>
          <GreenshotIcon s={24} />
          <MonitorIcon />
          <SpeakerIcon />
          <Clock>23:56<br />03/10/2023</Clock>
          <NoticeIcon />
        </Tray>
      </Taskbar>
    </Window>
  );
}
